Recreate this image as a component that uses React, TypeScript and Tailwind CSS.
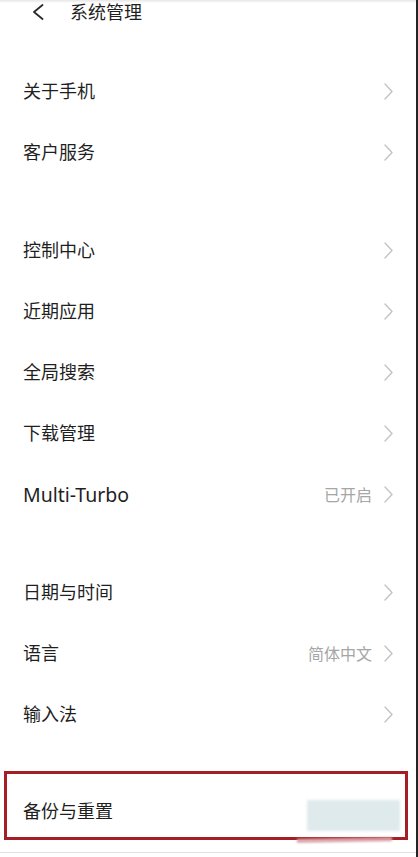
import type { ReactNode } from "react";

const font = {
  fontFamily: '"Noto Sans", "Noto Sans CJK SC", sans-serif',
};

function Chevron() {
  return (
    <svg width="9" height="17" viewBox="0 0 9 17" fill="none" className="shrink-0">
      <path d="M1 1l7 7.5L1 16" stroke="#c4c4c4" strokeWidth="1.4" strokeLinecap="round" strokeLinejoin="round" />
    </svg>
  );
}

function Row({ label, value, latin = false }: { label: string; value?: string; latin?: boolean }) {
  return (
    <div className="h-[61px] flex items-center justify-between pl-[23px] pr-[23px]">
      <span className={latin ? "text-[19.5px] text-[#1f1f1f]" : "text-[18px] text-[#1f1f1f]"}>{label}</span>
      <div className="flex items-center gap-[12px]">
        {value && <span className="text-[16px] text-[#a6a6a6]">{value}</span>}
        <Chevron />
      </div>
    </div>
  );
}

function Group({ children }: { children: ReactNode }) {
  return <div className="flex flex-col">{children}</div>;
}

export default function App() {
  return (
    <div
      className="w-[418px] h-[857px] bg-white border-r-2 border-[#242424] overflow-hidden flex flex-col"
      style={font}
    >
      <div className="h-[3px] bg-gradient-to-b from-[#e6e6e6] to-white" />
      <div className="h-[21px] flex items-center pl-[32px] gap-[26px] -mt-[2px]">
        <svg width="12" height="16" viewBox="0 0 12 16" fill="none">
          <path d="M10.5 1L2 8l8.5 7" stroke="#2a2a2a" strokeWidth="1.8" strokeLinecap="round" strokeLinejoin="round" />
        </svg>
        <span className="text-[18px] text-[#1f1f1f] leading-none">系统管理</span>
      </div>

      <div className="pt-[39px]">
        <Group>
          <Row label="关于手机" />
          <Row label="客户服务" />
        </Group>
      </div>

      <div className="pt-[37px]">
        <Group>
          <Row label="控制中心" />
          <Row label="近期应用" />
          <Row label="全局搜索" />
          <Row label="下载管理" />
          <Row label="Multi-Turbo" value="已开启" latin />
        </Group>
      </div>

      <div className="pt-[37px]">
        <Group>
          <Row label="日期与时间" />
          <Row label="语言" value="简体中文" />
          <Row label="输入法" />
        </Group>
      </div>

      <div className="pt-[26px] pl-[4px] pr-[8px]">
        <div className="relative h-[69px] border-[3px] border-[#a51e26] flex items-center pl-[16px] pt-[12px]">
          <span className="text-[18px] text-[#1f1f1f]">备份与重置</span>
          <div className="absolute left-[300px] top-[26px] w-[93px] h-[31px] bg-[#dfeaec] blur-[1.5px]" />
          <div className="absolute left-[290px] bottom-[-5px] w-[95px] h-[4px] bg-[#d9a3a8] blur-[1px] -rotate-1" />
        </div>
      </div>
      <div className="mt-[12px] h-px bg-[#e2e2e2]" />
    </div>
  );
}
